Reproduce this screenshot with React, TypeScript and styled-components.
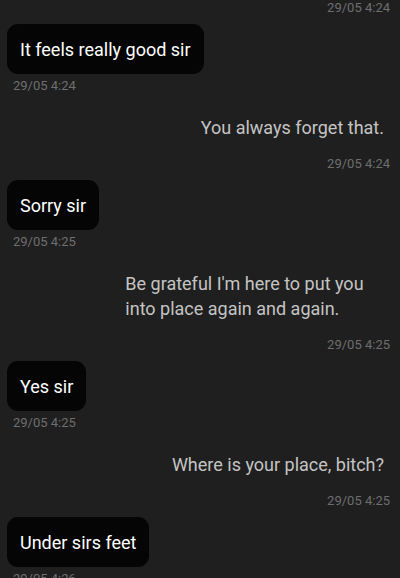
import React from 'react';
import styled, { createGlobalStyle } from 'styled-components';

const GlobalStyle = createGlobalStyle`
  html, body {
    margin: 0;
    padding: 0;
    background: #1f1f1f;
    overflow: hidden;
  }
  body {
    font-family: Roboto, "Noto Sans", sans-serif;
  }
`;

const Thread = styled.div`
  width: 400px;
  height: 578px;
  overflow: hidden;
  box-sizing: border-box;
  padding: 0 3px 0 7px;
  display: flex;
  flex-direction: column;
  gap: 8px;
  background: #1f1f1f;
`;

const Group = styled.div<{ $mine?: boolean }>`
  display: flex;
  flex-direction: column;
  align-items: ${(p) => (p.$mine ? 'flex-end' : 'flex-start')};
`;

const Bubble = styled.div<{ $mine?: boolean }>`
  max-width: 73%;
  box-sizing: border-box;
  padding: 12.5px 13px;
  border-radius: 11px;
  background: ${(p) => (p.$mine ? 'transparent' : '#050505')};
  color: ${(p) => (p.$mine ? '#c4c4c4' : '#ffffff')};
  font-size: 18px;
  line-height: 25px;
`;

const Stamp = styled.div<{ $mine?: boolean; $first?: boolean }>`
  margin-top: ${(p) => (p.$first ? '0' : '4px')};
  padding: ${(p) => (p.$mine ? '0 7px 0 0' : '0 0 0 6px')};
  font-size: 13px;
  line-height: 16px;
  color: #6e6e6e;
`;

interface Message {
  text: string;
  time: string;
  mine?: boolean;
}

const messages: Message[] = [
  { text: 'It feels really good sir', time: '29/05 4:24' },
  { text: 'You always forget that.', time: '29/05 4:24', mine: true },
  { text: 'Sorry sir', time: '29/05 4:25' },
  { text: "Be grateful I'm here to put you into place again and again.", time: '29/05 4:25', mine: true },
  { text: 'Yes sir', time: '29/05 4:25' },
  { text: 'Where is your place, bitch?', time: '29/05 4:25', mine: true },
  { text: 'Under sirs feet', time: '29/05 4:26' },
];

const App: React.FC = () => (
  <>
    <GlobalStyle />
    <Thread>
      <Group $mine>
        <Stamp $mine $first>29/05 4:24</Stamp>
      </Group>
      {messages.map((m, i) => (
        <Group key={i} $mine={m.mine}>
          <Bubble $mine={m.mine}>{m.text}</Bubble>
          <Stamp $mine={m.mine}>{m.time}</Stamp>
        </Group>
      ))}
    </Thread>
  </>
);

export default App;
